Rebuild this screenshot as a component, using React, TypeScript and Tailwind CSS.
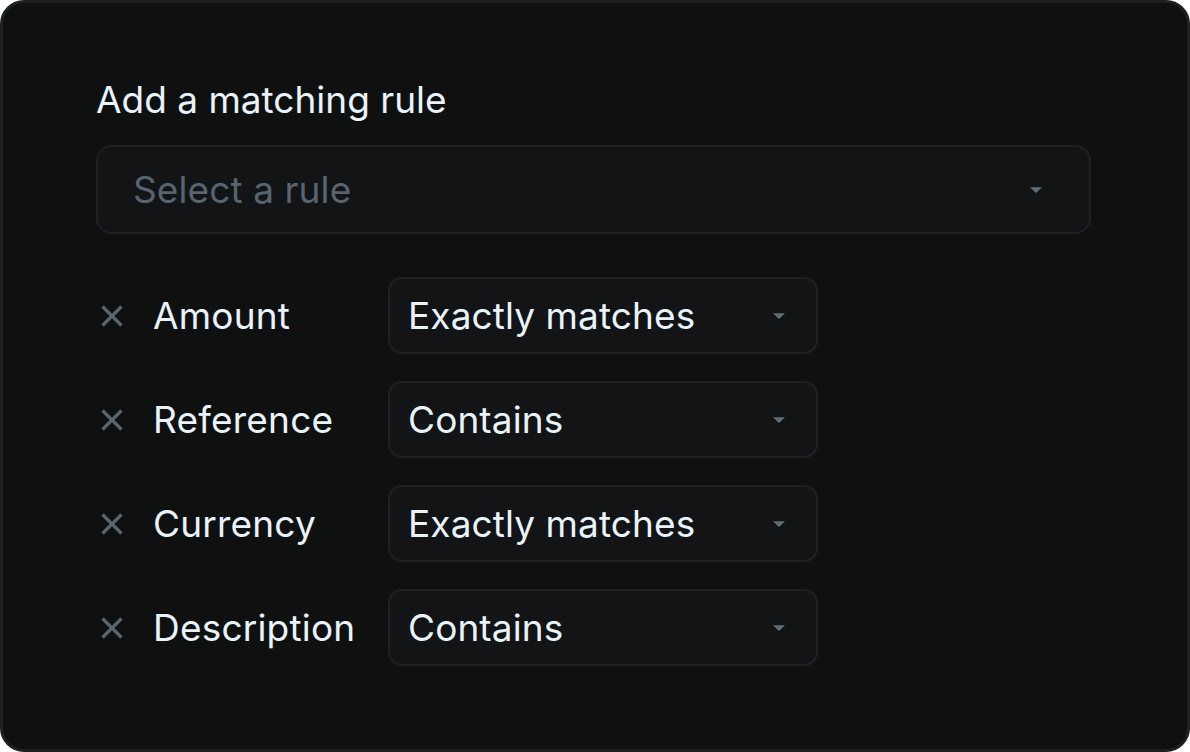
const rules = [
  { field: "Amount", match: "Exactly matches" },
  { field: "Reference", match: "Contains" },
  { field: "Currency", match: "Exactly matches" },
  { field: "Description", match: "Contains" },
];

function Caret() {
  return (
    <svg width="14" height="8" viewBox="0 0 14 8" className="shrink-0">
      <path d="M1 1.2 H13 L7.6 6.6 Q7 7.2 6.4 6.6 Z" fill="#5f6e79" />
    </svg>
  );
}

function Cross() {
  return (
    <svg width="24" height="24" viewBox="0 0 24 24" className="shrink-0">
      <path d="M2.5 2.5 L21.5 21.5 M21.5 2.5 L2.5 21.5" stroke="#56656f" strokeWidth="3.2" />
    </svg>
  );
}

export default function App() {
  return (
    <div
      className="w-[1190px] h-[752px] bg-[#0f1111] border-[3px] border-[#1f2023] rounded-[24px] overflow-hidden"
      style={{ fontFamily: "Inter, 'Noto Sans', sans-serif" }}
    >
      <div className="pl-[93px] pr-[96px] pt-[77px]">
        {/* Heading */}
        <h2 className="text-[37px] leading-[40px] text-[#e8f3fb]">Add a matching rule</h2>

        {/* Rule select */}
        <div className="mt-[25px] h-[89px] w-[995px] flex items-center justify-between rounded-[16px] border-2 border-[#1f2124] bg-[#131416] pl-[35px] pr-[46px]">
          <span className="text-[37px] tracking-[0.1px] text-[#56656f]">Select a rule</span>
          <Caret />
        </div>

        {/* Rule rows */}
        <div className="mt-[43px] flex flex-col gap-[27px]">
          {rules.map((r, i) => (
            <div key={i} className="flex items-center">
              <div className="w-[57px] flex items-center pl-[4px]">
                <Cross />
              </div>
              <span className="w-[235px] text-[37px] tracking-[0.2px] text-[#e8f3fb]">{r.field}</span>
              <div className="w-[430px] h-[77px] flex items-center justify-between rounded-[14px] border-2 border-[#1f2124] bg-[#131416] pl-[18px] pr-[30px]">
                <span className="text-[37px] tracking-[0.1px] text-[#e8f3fb]">{r.match}</span>
                <Caret />
              </div>
            </div>
          ))}
        </div>
      </div>
    </div>
  );
}
